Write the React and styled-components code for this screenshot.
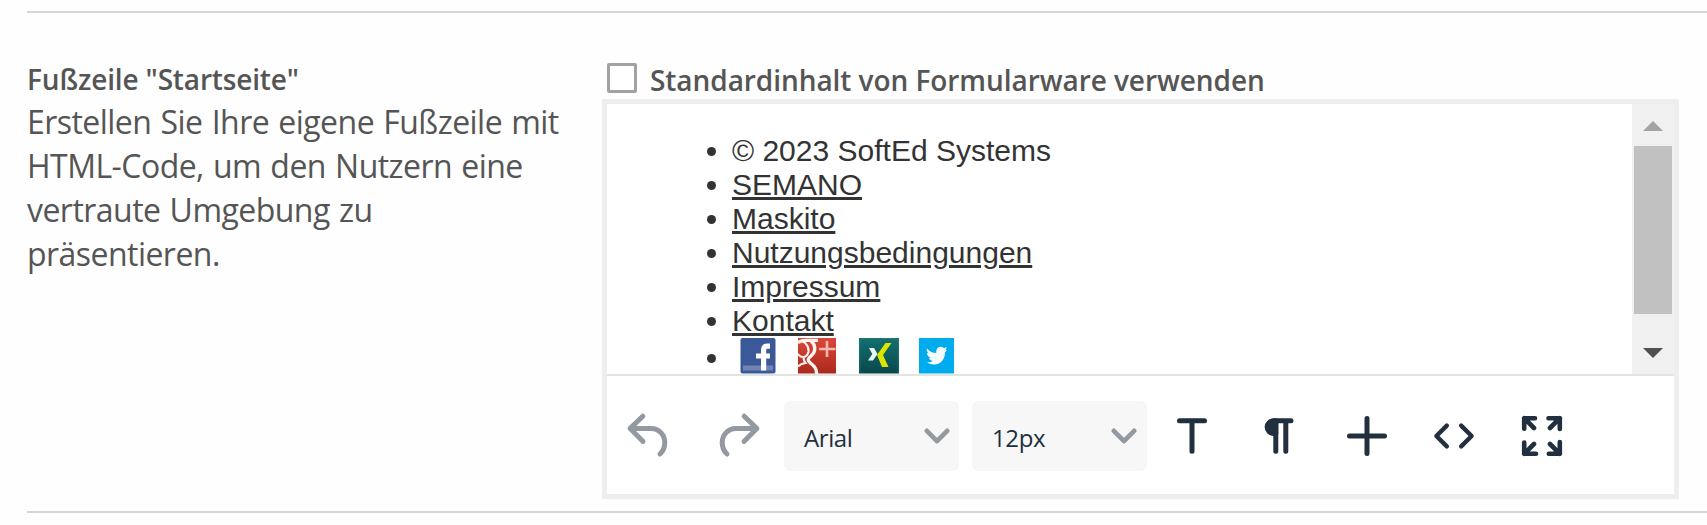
import React from 'react';
import styled, { createGlobalStyle } from 'styled-components';

const style = {
  'font-ui': '"Open Sans", "Noto Sans", sans-serif',
  'font-content': '"Liberation Sans", Arial, sans-serif',
  'font-color': '#555555',
  'font-color-content': '#333333',
  'icon-color': '#222f3e',
  'icon-color-disabled': '#9299a1',
  'line-color': '#d5d5d5',
  'border-color': '#eeeeee',
};

const GlobalStyle = createGlobalStyle`
  *{
    box-sizing: border-box;
  }
  body{
    margin: 0;
    background: #fefefe;
    font-family: ${style['font-ui']};
    color: ${style['font-color']};
  }
`;

const Page = styled.div`
  width: 1707px;
  height: 525px;
  padding: 11px 0 0 27px;
  overflow: hidden;
`;

const SettingRow = styled.section`
  display: flex;
  height: 502px;
  border-top: 2px solid ${style['line-color']};
  border-bottom: 2px solid ${style['line-color']};
`;

const Description = styled.div`
  width: 575px;
  padding: 44px 30px 0 0;
  line-height: 44px;
  h3{
    height: 43px;
    margin: 0;
    font-size: 28px;
    font-weight: 600;
    letter-spacing: -0.15px;
  }
  p{
    margin: 0;
    font-size: 32px;
    letter-spacing: -0.54px;
    word-spacing: 1.4px;
  }
`;

const Setting = styled.div`
  width: 1077px;
  padding-top: 45px;
`;

const CheckboxLabel = styled.label`
  display: flex;
  height: 41px;
  padding-left: 5px;
  line-height: 38px;
  font-size: 28px;
  font-weight: 600;
  letter-spacing: -0.06px;
  span{
    padding: 3px 0 0 13px;
  }
`;

const Checkbox = styled.input`
  appearance: none;
  width: 30px;
  height: 30px;
  margin: 5px 0 0;
  border: 3px solid #a2a2a2;
  border-radius: 2px;
  background: #ffffff;
`;

const Editor = styled.div`
  height: 400px;
  border: 5px solid ${style['border-color']};
  background: #ffffff;
`;

const EditArea = styled.div`
  display: flex;
  height: 272px;
  border-bottom: 2px solid #e3e3e3;
`;

const Content = styled.div`
  flex: 1;
  padding-top: 30px;
  overflow: hidden;
  font-family: ${style['font-content']};
  font-size: 30px;
  line-height: 34px;
  color: ${style['font-color-content']};
  ul{
    margin: 0;
    padding-left: 125px;
  }
  a{
    color: inherit;
    text-decoration-thickness: 3px;
    text-underline-offset: 2px;
  }
`;

const SocialLinks = styled.span`
  display: inline-flex;
  height: 36px;
  padding-left: 8px;
  vertical-align: -6px;
`;

const SocialIcon = styled.svg`
  display: block;
  width: ${props => props.$width}px;
  height: 36px;
  margin-right: ${props => props.$space}px;
`;

const Scrollbar = styled.div`
  display: flex;
  flex-direction: column;
  align-items: center;
  width: 42px;
  background: #f0f0f0;
`;

const ScrollArrow = styled.svg`
  width: 42px;
  height: 42px;
  fill: ${props => props.$color};
`;

const ScrollThumb = styled.div`
  width: 38px;
  height: 168px;
  margin-bottom: 18px;
  background: #c1c1c1;
`;

const Toolbar = styled.div`
  display: flex;
  height: 118px;
  padding-top: 25px;
`;

const HistoryGroup = styled.div`
  display: flex;
  gap: 9px;
  width: 177px;
`;

const ToolGroup = styled.div`
  display: flex;
  padding-left: 1px;
`;

const ToolButton = styled.button`
  display: flex;
  align-items: center;
  justify-content: center;
  width: ${props => props.$width || 87.5}px;
  height: 70px;
  padding: 0;
  border: none;
  background: none;
  color: ${props => (props.disabled ? style['icon-color-disabled'] : style['icon-color'])};
  svg{
    flex: none;
    width: 48px;
    height: 48px;
    fill: none;
    stroke: currentColor;
    stroke-width: 5;
    stroke-linecap: round;
    stroke-linejoin: round;
  }
`;

const Select = styled.button`
  display: flex;
  align-items: center;
  justify-content: space-between;
  width: 175px;
  height: 70px;
  margin-right: ${props => props.$space || 0}px;
  padding: 0 ${props => props.$right}px 0 20px;
  border: none;
  border-radius: 6px;
  background: #f7f7f7;
  font-family: ${style['font-ui']};
  font-size: 24px;
  letter-spacing: -0.4px;
  color: ${style['icon-color']};
  span{
    padding-top: 2px;
  }
  svg{
    width: 26px;
    height: 16px;
    fill: none;
    stroke: ${style['icon-color-disabled']};
    stroke-width: 4.6;
    stroke-linecap: round;
    stroke-linejoin: round;
  }
`;

const links = ['SEMANO', 'Maskito', 'Nutzungsbedingungen', 'Impressum', 'Kontakt'];

const tools = [
  {
    name: 'Text',
    icon: <path d="M11.5 8.8H36.5M24 8.8V39.3" />,
  },
  {
    name: 'Absatz',
    icon: (
      <>
        <path d="M20.8 8.8V39.3M30.8 8.8V39.3M19 8.8H36" />
        <path d="M20.8 8.8H18.4a6.3 6.3 0 0 0 0 12.6H20.8z" fill="currentColor" />
      </>
    ),
  },
  {
    name: 'Einfügen',
    icon: <path d="M24 6.5V41.5M6.5 24H41.5" />,
  },
  {
    name: 'Quelltext',
    icon: <path d="M16.8 13.6L6.4 24L16.8 34.4M31.2 13.6L41.6 24L31.2 34.4" strokeWidth="4.4" />,
  },
  {
    name: 'Vollbild',
    icon: (
      <path
        d="M6.2 16.8V6.2H17M6.2 6.2L16 16M30.5 6.2H41.8V17M41.8 6.2L32 16M6.2 30.5V41.8H18M6.2 41.8L16 32M41.8 30V41.8H30.8M41.8 41.8L32 32"
        strokeWidth="4.6"
      />
    ),
  },
];

const FacebookIcon = () => (
  <SocialIcon $width={36} $space={22} viewBox="0 0 36 36">
    <rect x="0.5" width="35" height="35.5" rx="2" fill="#3b5998" />
    <rect x="3" y="27.5" width="30" height="5" fill="#7083b2" />
    <path d="M30 8.2H27Q23.6 8.2 23.6 12.5V32.5M16 18H30" fill="none" stroke="#ffffff" strokeWidth="5.2" />
  </SocialIcon>
);

const GoogleIcon = () => (
  <SocialIcon $width={38} $space={23} viewBox="0 0 38 36">
    <defs>
      <linearGradient id="google" x1="0" y1="0" x2="0" y2="1">
        <stop offset="0" stopColor="#dc4738" />
        <stop offset="1" stopColor="#a92a1c" />
      </linearGradient>
    </defs>
    <rect width="38" height="35.5" fill="url(#google)" />
    <g fill="none" stroke="#fff4f1">
      <path d="M0 4.5Q4 2 9 2.4H20M13 3C18 7 18 14 13 18C9 21 9.5 23 13 25.5C17 28.5 19 31 18.5 36" strokeWidth="3.4" />
      <path d="M4 3C9 5 11 10 10.5 14Q9 19 5 19Q2 19 0 16M6 19Q5 22 7.5 25Q3 25.5 0 28.5" strokeWidth="2.2" />
      <path d="M29 3V19M21 11H37.5" stroke="#f3b9b1" strokeWidth="2.6" />
    </g>
  </SocialIcon>
);

const XingIcon = () => (
  <SocialIcon $width={40} $space={20} viewBox="0 0 40 36">
    <defs>
      <linearGradient id="xing" x1="0" y1="0" x2="0" y2="1">
        <stop offset="0" stopColor="#12706f" />
        <stop offset="1" stopColor="#08484b" />
      </linearGradient>
    </defs>
    <rect width="40" height="35.5" fill="url(#xing)" />
    <path d="M1 35V1H39V35" fill="none" stroke="#3a8583" strokeOpacity="0.45" />
    <path d="M10 10H15L18.5 16L14 22.5H9L13.3 16z" fill="#eaf5f5" />
    <path d="M26.5 5H32.5L24 17L29.5 29H23L18 17z" fill="#dce500" />
  </SocialIcon>
);

const TwitterIcon = () => (
  <SocialIcon $width={35} $space={0} viewBox="0 0 35 36">
    <rect width="35" height="35.5" fill="#00aced" />
    <path
      d="M8 10.5Q12 15 17.2 15Q16.8 9 21.6 8.8Q23.5 8.8 25 10.2L27.8 9L26.6 11.7L28 12L26 14.5C26 22 21 26.5 15 26.5Q11 26.5 8 24.6Q11.5 24.5 13.5 23Q10.5 22.2 9.8 20L11.5 19.7Q8 18 8 15L9.7 15.3Q7 13.2 8 10.5z"
      fill="#f5fcff"
    />
  </SocialIcon>
);

const SelectBox = ({ text, space, right }) => (
  <Select type="button" $space={space} $right={right}>
    <span>{text}</span>
    <svg viewBox="0 0 26 16"><path d="M2.8 2.8L13 13.2L23.2 2.8" /></svg>
  </Select>
);

const App = () => {
  return (
    <>
      <GlobalStyle />
      <Page>
        <SettingRow>
          <Description>
            <h3>Fußzeile "Startseite"</h3>
            <p>Erstellen Sie Ihre eigene Fußzeile mit HTML-Code, um den Nutzern eine vertraute Umgebung zu präsentieren.</p>
          </Description>
          <Setting>
            <CheckboxLabel>
              <Checkbox type="checkbox" />
              <span>Standardinhalt von Formularware verwenden</span>
            </CheckboxLabel>
            <Editor>
              <EditArea>
                <Content>
                  <ul>
                    <li>© 2023 SoftEd Systems</li>
                    {links.map(link => <li key={link}><a href="#">{link}</a></li>)}
                    <li>
                      <SocialLinks>
                        <FacebookIcon />
                        <GoogleIcon />
                        <XingIcon />
                        <TwitterIcon />
                      </SocialLinks>
                    </li>
                  </ul>
                </Content>
                <Scrollbar>
                  <ScrollArrow $color="#a3a3a3" viewBox="0 0 42 42"><path d="M11 27L21 17L31 27z" /></ScrollArrow>
                  <ScrollThumb />
                  <ScrollArrow $color="#505050" viewBox="0 0 42 42"><path d="M11 16L21 26L31 16z" /></ScrollArrow>
                </Scrollbar>
              </EditArea>
              <Toolbar>
                <HistoryGroup>
                  <ToolButton $width={82} disabled aria-label="Rückgängig">
                    <svg viewBox="0 0 48 48"><path d="M18.8 4.2L6.2 16.4L19 29.4M6.2 16.4H27C35 16.4 40.8 23 40.8 30.5C40.8 35 39 39.3 36 42" /></svg>
                  </ToolButton>
                  <ToolButton $width={82} disabled aria-label="Wiederholen">
                    <svg viewBox="0 0 48 48"><path d="M29.2 4.2L41.8 16.4L29 29.4M41.8 16.4H21C13 16.4 7.2 23 7.2 30.5C7.2 35 9 39.3 12 42" /></svg>
                  </ToolButton>
                </HistoryGroup>
                <SelectBox text="Arial" space={13} right={9} />
                <SelectBox text="12px" right={10} />
                <ToolGroup>
                  {tools.map(tool => (
                    <ToolButton key={tool.name} aria-label={tool.name}>
                      <svg viewBox="0 0 48 48">{tool.icon}</svg>
                    </ToolButton>
                  ))}
                </ToolGroup>
              </Toolbar>
            </Editor>
          </Setting>
        </SettingRow>
      </Page>
    </>
  );
};

export default App;
